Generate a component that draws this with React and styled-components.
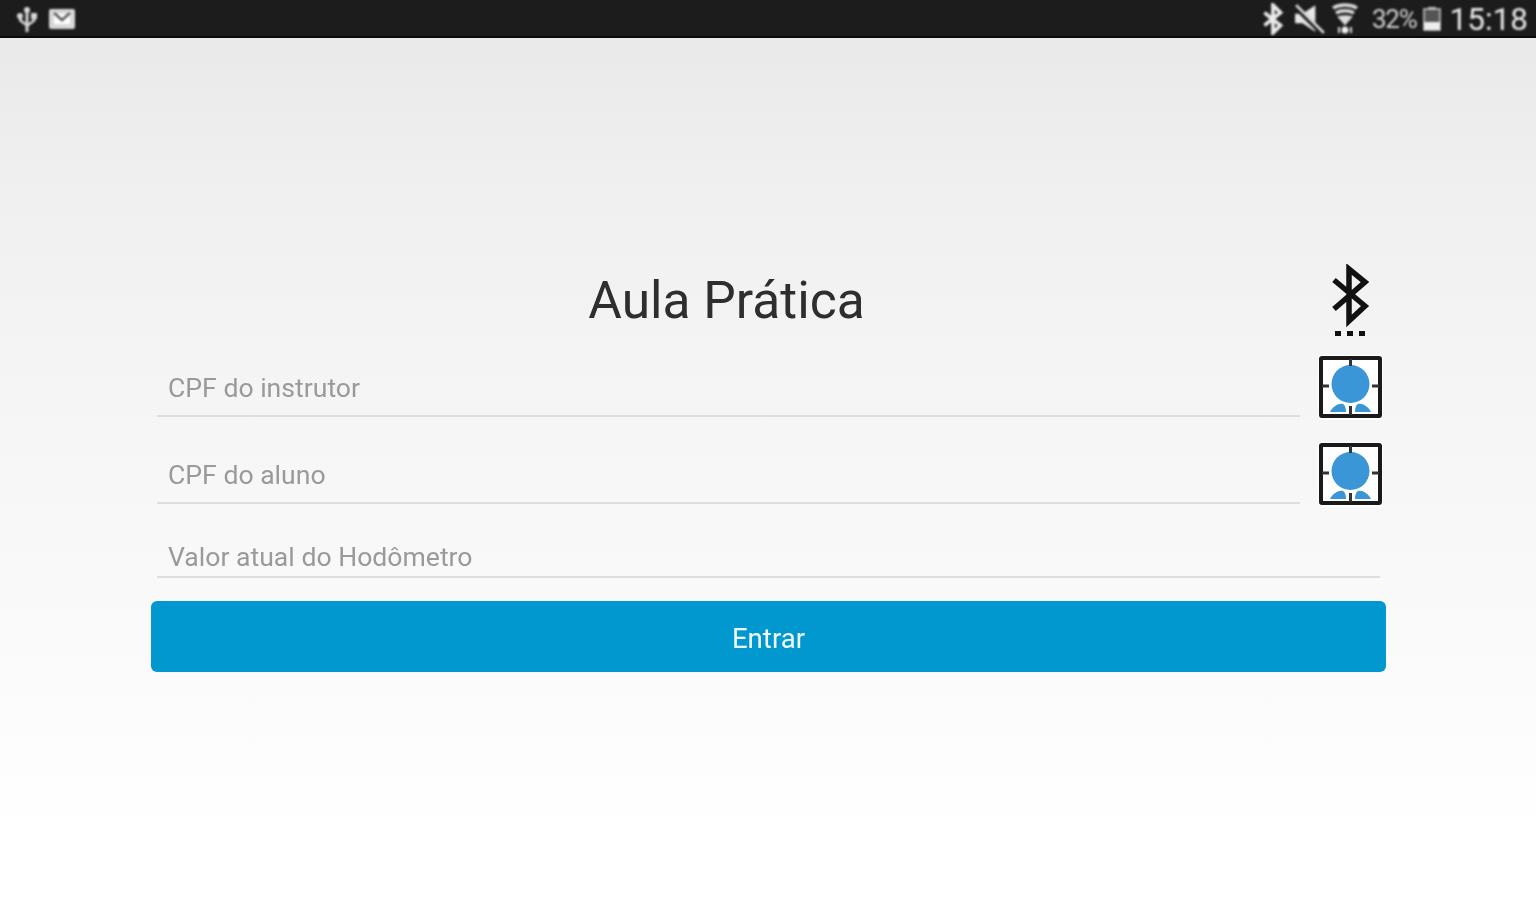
import React from "react";
import styled, { createGlobalStyle } from "styled-components";

const Global = createGlobalStyle`
  html, body { margin: 0; padding: 0; height: 100%; background: #fff; }
  #root { height: 100%; }
  * { box-sizing: border-box; }
`;

const Screen = styled.div`
  width: 1536px;
  height: 900px;
  overflow: hidden;
  display: flex;
  flex-direction: column;
  font-family: Roboto, "Liberation Sans", sans-serif;
  background: linear-gradient(180deg, #e8e8e8 0px, #f0f0f0 200px, #f7f7f7 480px, #fbfbfb 680px, #ffffff 840px);
`;

const StatusBar = styled.header`
  height: 38px;
  flex: none;
  background: #1c1c1c;
  border-bottom: 2px solid #0a0a0a;
  display: flex;
  align-items: center;
  justify-content: space-between;
  padding: 2px 8px 0 16px;
  color: #e4e4e4;
`;

const StatusGroup = styled.div`
  display: flex;
  align-items: center;
  gap: ${(p) => p.$gap || 0}px;
  filter: blur(0.8px);
`;

const IconCluster = styled.div`
  display: flex;
  align-items: center;
  gap: ${(p) => p.$gap}px;
`;

const Battery = styled.span`
  font-size: 26px;
  letter-spacing: -1.2px;
  color: #d4d4d4;
  margin: 0 6px 0 13px;
`;

const Clock = styled.span`
  font-size: 31.5px;
  font-weight: 400;
  color: #ececec;
  margin-left: 9px;
`;

const Form = styled.main`
  width: 1235px;
  margin: 226px 0 0 151px;
  display: flex;
  flex-direction: column;
`;

const TitleRow = styled.div`
  display: flex;
  align-items: flex-start;
  height: 92px;
`;

const Title = styled.h1`
  margin: 5px 0 0;
  width: 1151px;
  text-align: center;
  font-size: 51.5px;
  line-height: 64px;
  font-weight: 400;
  color: #2e2e2e;
  filter: blur(0.5px);
`;

const BluetoothSlot = styled.div`
  width: 84px;
  padding-left: 11px;
  display: flex;
  justify-content: center;
  filter: blur(0.6px);
`;

const FieldRow = styled.div`
  display: flex;
  align-items: flex-start;
  height: 87px;
`;

const Field = styled.div`
  height: 61px;
  margin-left: 6px;
  width: ${(p) => (p.$full ? 1223 : 1143)}px;
  border-bottom: 2px solid #dedede;
  padding: ${(p) => (p.$full ? 22 : 14)}px 0 0 11px;
  font-size: 26.6px;
  line-height: 36px;
  color: #9a9a9a;
  filter: blur(0.55px);
`;

const ScanButton = styled.div`
  margin: -1px 0 0 18px;
  width: 65px;
  height: 65px;
  filter: blur(0.6px);
`;

const LastRow = styled.div`
  height: 84px;
  margin-top: -13px;
  display: flex;
  align-items: flex-start;
`;

const EnterButton = styled.button`
  height: 71px;
  width: 1235px;
  border: 0;
  border-radius: 6px;
  background: #0098ce;
  color: #f2fafd;
  font-family: inherit;
  font-size: 27.6px;
  font-weight: 400;
  padding: 3px 0 0;
  filter: blur(0.5px);
`;

const Usb = () => (
  <svg width="22" height="28" viewBox="0 0 22 28" fill="#d8d8d8">
    <circle cx="11" cy="5" r="3" />
    <rect x="9.500" y="5" width="3" height="22" />
    <circle cx="4" cy="11" r="3" />
    <rect x="15" y="8" width="6" height="6" />
    <path d="M3 12h3v3l5 4v3l-8-6zM16.500 12h3v4l-8 6v-3l5-4z" />
  </svg>
);

const Mail = () => (
  <svg width="26" height="20" viewBox="0 0 26 20">
    <rect width="26" height="20" rx="2" fill="#d8d8d8" />
    <path d="M5 5h16v10H5z" fill="#fff" />
    <path d="M5 4l8 7 8-7" fill="none" stroke="#5a5a5a" strokeWidth="2.500" />
  </svg>
);

const BtSmall = () => (
  <svg width="24" height="32" viewBox="0 0 22 30" fill="none" stroke="#ececec" strokeWidth="3.500">
    <path d="M3 9l15 12-7 7V2l7 7L3 21" />
  </svg>
);

const Muted = () => (
  <svg width="36" height="32" viewBox="-3.750 0 33.750 30">
    <path d="M1 10h7l12-8v25l-12-8H1z" fill="#e8e8e8" />
    <path d="M1 3l26 26" stroke="#1c1c1c" strokeWidth="5" />
    <path d="M2 2l26 26" stroke="#e4e4e4" strokeWidth="2.500" />
  </svg>
);

const Wifi = () => (
  <svg width="28" height="32" viewBox="0 0 28 32" fill="none" stroke="#dcdcdc">
    <path d="M2 5c7-4 17-4 24 0" strokeWidth="3.500" />
    <path d="M5 10c5-3 13-3 18 0" strokeWidth="3.500" />
    <path d="M8 14c4-1 8-1 12 0l-6 7z" fill="#dcdcdc" strokeWidth="2" />
    <circle cx="14" cy="27" r="3.500" fill="#f0f0f0" stroke="none" />
    <path d="M8 24v6M20 24v6" strokeWidth="2" />
  </svg>
);

const BatteryIcon = () => (
  <svg width="18" height="24" viewBox="0 0 18 24">
    <rect x="5" y="0" width="8" height="3" fill="#bbb" />
    <rect x="1" y="2" width="16" height="21" fill="#555" stroke="#ccc" strokeWidth="1.500" />
    <rect x="1" y="15" width="16" height="8" fill="#eee" />
  </svg>
);

const BtLarge = () => (
  <svg width="40" height="76" viewBox="0 0 40 76" style={{ display: "block" }}>
    <path d="M4 16l31 26-16 15V5l16 13L4 45" fill="none" stroke="#111" strokeWidth="5.500" />
    <rect x="5" y="67" width="6" height="5" fill="#111" />
    <rect x="17" y="67" width="6" height="5" fill="#111" />
    <rect x="29" y="67" width="6" height="5" fill="#111" />
  </svg>
);

const Target = () => (
  <svg width="65" height="65" viewBox="0 0 65 65" style={{ display: "block" }}>
    <rect x="0" y="0" width="65" height="65" rx="3" fill="#fff" />
    <circle cx="32.500" cy="29" r="19" fill="#3a96d6" />
    <path d="M12 57c3-6 9-9 13-8 2 1 3 4 3 8zM53 57c-3-6-9-9-13-8-2 1-3 4-3 8z" fill="#3a96d6" />
    <rect x="3" y="3" width="59" height="58" rx="1" fill="none" stroke="#1a1a1a" strokeWidth="4" />
    <path d="M32.500 4v7M32.500 51v9M4 31h7M54 31h7" stroke="#333" strokeWidth="3" />
  </svg>
);

export default function App() {
  return (
    <Screen>
      <Global />
      <StatusBar>
        <StatusGroup $gap={11}>
          <Usb />
          <Mail />
        </StatusGroup>
        <StatusGroup>
          <IconCluster $gap={5}>
            <BtSmall />
            <Muted />
            <Wifi />
          </IconCluster>
          <Battery>32%</Battery>
          <BatteryIcon />
          <Clock>15:18</Clock>
        </StatusGroup>
      </StatusBar>
      <Form>
        <TitleRow>
          <Title>Aula Prática</Title>
          <BluetoothSlot>
            <BtLarge />
          </BluetoothSlot>
        </TitleRow>
        <FieldRow>
          <Field>CPF do instrutor</Field>
          <ScanButton>
            <Target />
          </ScanButton>
        </FieldRow>
        <FieldRow>
          <Field>CPF do aluno</Field>
          <ScanButton>
            <Target />
          </ScanButton>
        </FieldRow>
        <LastRow>
          <Field $full>Valor atual do Hodômetro</Field>
        </LastRow>
        <EnterButton>Entrar</EnterButton>
      </Form>
    </Screen>
  );
}
